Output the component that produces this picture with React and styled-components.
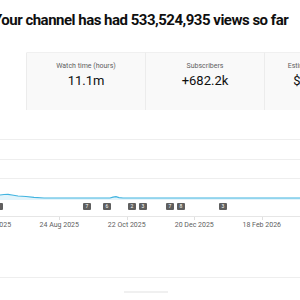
import styled, { createGlobalStyle } from "styled-components";

const GlobalStyle = createGlobalStyle`
  html, body {
    margin: 0;
    padding: 0;
    background: #ffffff;
  }
  body {
    font-family: Roboto, "Liberation Sans", Arial, sans-serif;
    color: #0f0f0f;
    overflow: hidden;
  }
`;

const metrics = [
  { label: "Views", value: "533.5m", width: 119, selected: true },
  { label: "Watch time (hours)", value: "11.1m", width: 119 },
  { label: "Subscribers", value: "+682.2k", width: 119 },
  { label: "Estimated revenue", value: "$104.6k", width: 104 },
];

const dates = ["23 Jun 2025", "24 Aug 2025", "22 Oct 2025", "20 Dec 2025", "18 Feb 2026"];

const markers = [
  { x: -5, n: 1 },
  { x: 83, n: 7 },
  { x: 103, n: 6 },
  { x: 128, n: 2 },
  { x: 139, n: 3 },
  { x: 166, n: 7 },
  { x: 177, n: 8 },
  { x: 219, n: 3 },
];

// chart line, in page pixels (x 0..300, y around the baseline at 198)
const linePath =
  "M0 195 L4 194.5 L8 194.3 L12 195 L18 196 L26 196.5 L34 197.3 L44 198 L110 198 L113 197.2 L116 196.6 L119 197.6 L123 198 L300 198";

export default function App() {
  return (
    <Page>
      <GlobalStyle />
      <Title>Your channel has had 533,524,935 views so far</Title>

      <Tabs>
        {metrics.map((m) => (
          <Tab key={m.label} $w={m.width} $selected={m.selected}>
            <TabLabel>{m.label}</TabLabel>
            <TabValue>{m.value}</TabValue>
          </Tab>
        ))}
      </Tabs>

      <Chart>
        <svg width="300" height="96" viewBox="0 110 300 96">
          <line x1="0" x2="300" y1="139.5" y2="139.5" stroke="#eeeeee" />
          <line x1="0" x2="300" y1="159.5" y2="159.5" stroke="#eeeeee" />
          <line x1="0" x2="300" y1="178.5" y2="178.5" stroke="#eeeeee" />
          <path d={`${linePath} L300 200 L0 200 Z`} fill="#dcf1fa" opacity="0.8" />
          <path d={linePath} fill="none" stroke="#41b4e0" strokeWidth="1.2" />
        </svg>
        <Markers>
          {markers.map((m, i) => (
            <Marker key={i} style={{ left: m.x }}>
              {m.n}
            </Marker>
          ))}
        </Markers>
        <Axis>
          {dates.map((d) => (
            <AxisLabel key={d}>{d}</AxisLabel>
          ))}
        </Axis>
      </Chart>

      <Footer>
        <MoreBar />
      </Footer>
    </Page>
  );
}

const Page = styled.div`
  width: 300px;
  height: 300px;
  overflow: hidden;
  background: #fff;
`;

const Title = styled.h1`
  margin: 0;
  padding-top: 10px;
  margin-left: -7px;
  white-space: nowrap;
  font-size: 15px;
  line-height: 20px;
  font-weight: 700;
  letter-spacing: -0.5px;
  color: #0f0f0f;
`;

const Tabs = styled.div`
  display: flex;
  margin-top: 22px;
  margin-left: -92px;
  width: 480px;
  height: 58px;
`;

const Tab = styled.div`
  flex: 0 0 ${(p) => p.$w}px;
  box-sizing: border-box;
  background: ${(p) => (p.$selected ? "#ffffff" : "#f9f9f9")};
  border-top: 1px solid ${(p) => (p.$selected ? "#ffffff" : "#f0f0f0")};
  border-right: 1px solid #ececec;
  display: flex;
  flex-direction: column;
  align-items: center;
  padding-top: 9px;
`;

const TabLabel = styled.div`
  font-size: 7px;
  line-height: 9px;
  color: #606060;
  white-space: nowrap;
`;

const TabValue = styled.div`
  margin-top: 2px;
  font-size: 13px;
  line-height: 15px;
  color: #0f0f0f;
  white-space: nowrap;
`;

const Chart = styled.div`
  display: flex;
  flex-direction: column;
  & > svg {
    display: block;
  }
`;

const Markers = styled.div`
  position: relative;
  height: 13px;
  margin-top: -3px;
  border-bottom: 1px solid #e6e6e6;
`;

const Marker = styled.div`
  position: absolute;
  top: 0;
  width: 8px;
  height: 7px;
  background: #5f5f5f;
  color: #fff;
  font-size: 5px;
  line-height: 7px;
  text-align: center;
  border-radius: 1px;
`;

const Axis = styled.div`
  display: flex;
  margin-left: -42px;
  padding-top: 4px;
`;

const AxisLabel = styled.div`
  position: relative;
  flex: 0 0 67.5px;
  text-align: center;
  font-size: 7px;
  line-height: 9px;
  color: #606060;
  white-space: nowrap;

  &::before {
    content: "";
    position: absolute;
    top: -4px;
    left: 50%;
    width: 1px;
    height: 3px;
    background: #e0e0e0;
  }
`;

const Footer = styled.div`
  margin-top: 47px;
  border-top: 1px solid #eeeeee;
  display: flex;
  justify-content: center;
  padding-top: 13px;
`;

const MoreBar = styled.div`
  width: 44px;
  height: 2px;
  background: #f0f0f0;
  margin-left: -8px;
`;
